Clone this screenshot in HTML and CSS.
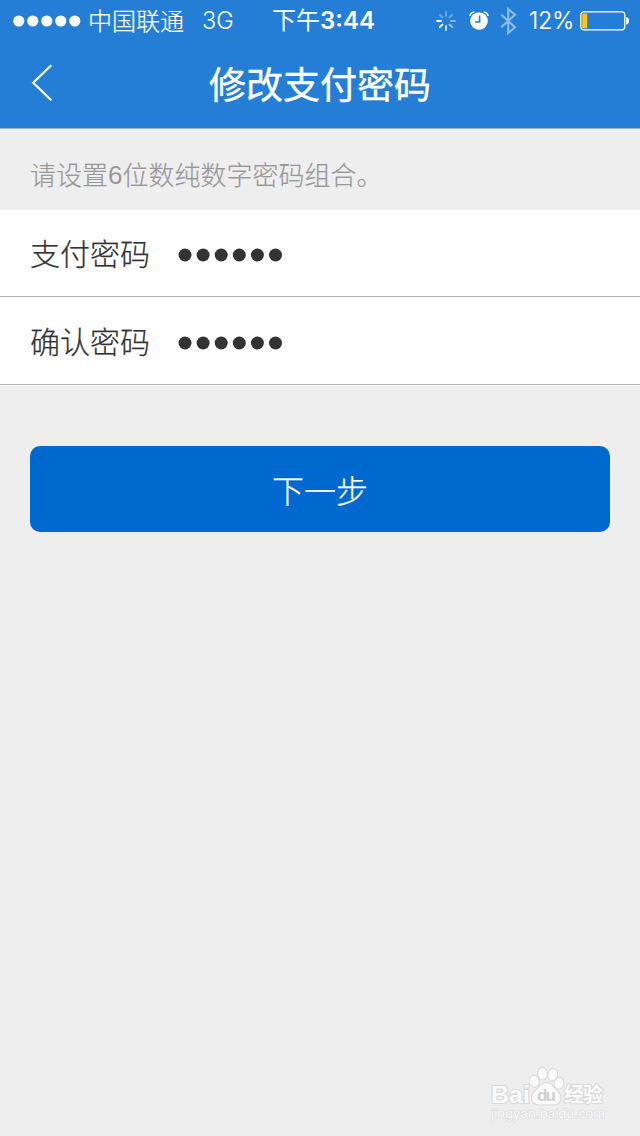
FILE: index.html
```html
<!DOCTYPE html>
<html lang="zh-CN">
<head>
<meta charset="utf-8">
<title>修改支付密码</title>
<link rel="stylesheet" href="styles.css">
</head>
<body>
<div class="screen">
  <header class="header">
    <div class="status">
      <svg class="signal" width="68" height="12" viewBox="0 0 68 12"><g fill="#fff"><circle cx="5.8" cy="6" r="5.6"/><circle cx="19.8" cy="6" r="5.6"/><circle cx="33.8" cy="6" r="5.6"/><circle cx="47.8" cy="6" r="5.6"/><circle cx="61.8" cy="6" r="5.6"/></g></svg>
      <span class="carrier">中国联通</span>
      <span class="network">3G</span>
      <span class="time">下午<b class="clock">3:44</b></span>
      <span class="indicators">
        <svg width="20" height="20" viewBox="-10 -10 20 20" stroke="#fff" stroke-width="1.8" stroke-linecap="round">
          <path d="M0-5V-9" opacity=".35"/><path d="M3.5-3.5L6.2-6.2" opacity=".35"/><path d="M5 0H9" opacity=".45"/><path d="M3.5 3.5L6.2 6.2" opacity=".55"/><path d="M0 5V9" opacity=".85"/><path d="M-3.5 3.5L-6.2 6.2"/><path d="M-5 0H-9"/><path d="M-3.5-3.5L-6.2-6.2" opacity=".35"/>
        </svg>
        <svg class="alarm" width="20" height="20" viewBox="0 0 20 20">
          <circle cx="10" cy="10" r="8.8" fill="#fff"/>
          <path d="M.9 5Q1.5 1.3 5.4.9M14.6.9Q18.5 1.3 19.1 5" fill="none" stroke="#fff" stroke-width="1.5"/>
          <path d="M10.6 4.6V11H6" fill="none" stroke="#247ed6" stroke-width="1.6"/>
        </svg>
        <svg class="bluetooth" width="17" height="28" viewBox="0 0 17 28"><path d="M1.2 7.8L15 20.2L8.2 26V2L15 7.8L1.2 20.2" fill="none" stroke="#8dbdf0" stroke-width="2.1"/></svg>
        <span class="percent">12%</span>
        <svg class="battery" width="50" height="20" viewBox="0 0 50 20"><rect x=".8" y=".8" width="44" height="18" rx="3" fill="none" stroke="#fff" stroke-width="1.3"/><rect x="2.2" y="2.5" width="5" height="14.7" rx="1" fill="#fdc50f"/><path d="M46.2 6Q49 6.4 49 9.8T46.2 13.6Z" fill="#fff"/></svg>
      </span>
    </div>
    <div class="nav">
      <svg class="back" width="22" height="38" viewBox="0 0 22 38"><path d="M20.3 1.3L2.2 18.8L20.3 36.3" fill="none" stroke="#fff" stroke-width="2.2"/></svg>
      <h1 class="title">修改支付密码</h1>
    </div>
  </header>
  <p class="hint">请设置<span class="digit">6</span>位数纯数字密码组合。</p>
  <div class="field"><span class="label">支付密码</span>
    <svg class="dots" width="106" height="14" viewBox="0 0 106 14"><g fill="#333"><circle cx="7" cy="7" r="6.5"/><circle cx="25.1" cy="7" r="6.5"/><circle cx="43.2" cy="7" r="6.5"/><circle cx="61.3" cy="7" r="6.5"/><circle cx="79.4" cy="7" r="6.5"/><circle cx="97.5" cy="7" r="6.5"/></g></svg>
  </div>
  <div class="field field-last"><span class="label">确认密码</span>
    <svg class="dots" width="106" height="14" viewBox="0 0 106 14"><g fill="#333"><circle cx="7" cy="7" r="6.5"/><circle cx="25.1" cy="7" r="6.5"/><circle cx="43.2" cy="7" r="6.5"/><circle cx="61.3" cy="7" r="6.5"/><circle cx="79.4" cy="7" r="6.5"/><circle cx="97.5" cy="7" r="6.5"/></g></svg>
  </div>
  <button class="next">下一步</button>
  <svg class="watermark" width="130" height="60" viewBox="0 0 130 60">
    <g fill="#fafafa" stroke="#d9d9d9" stroke-width="2" paint-order="stroke">
      <text class="wm-brand" x="1" y="37" textLength="39" lengthAdjust="spacingAndGlyphs">Bai</text>
      <ellipse cx="44.3" cy="15.3" rx="4.4" ry="5.6" transform="rotate(-15 44.3 15.3)"/>
      <ellipse cx="52.5" cy="7.7" rx="4.4" ry="5.9"/>
      <ellipse cx="62.7" cy="8.7" rx="4.4" ry="5.9" transform="rotate(12 62.7 8.7)"/>
      <ellipse cx="69" cy="17.5" rx="4.3" ry="5.4" transform="rotate(15 69 17.5)"/>
      <path d="M56.5 17C61.5 17 63.5 21.5 67 25C72.5 30 71.5 38 64 38.5H49C41 38 40 30 45.5 25C49.5 21.5 51.5 17 56.5 17Z"/>
      <text class="wm-cn" x="74" y="36" textLength="39">经验</text>
      <text class="wm-url" x="1" y="52" textLength="114" lengthAdjust="spacingAndGlyphs" stroke-width="1">jingyan.baidu.com</text>
    </g>
    <text class="wm-du" x="47" y="34.5" textLength="19">du</text>
  </svg>
</div>
</body>
</html>
```
FILE: styles.css
```css
* { box-sizing: border-box; }
body { margin: 0; font-family: "Noto Sans CJK SC", sans-serif; }
svg { display: block; flex: none; }
.screen { position: relative; height: 1136px; background: #eee; overflow: hidden; }
.header { height: 129px; background: #247ed6; border-bottom: 1px solid #93b4d3; color: #fff; }
.status { display: flex; align-items: center; height: 41px; padding-left: 13px; white-space: nowrap; font-size: 24px; line-height: 40px; }
.carrier { margin-left: 7px; width: 96px; padding-bottom: 2px; font-weight: 300; -webkit-text-stroke: .2px #fff; }
.network { margin-left: 18px; width: 32px; font-family: Inter, sans-serif; font-size: 23.5px; font-weight: 300; }
.time { margin-left: 38px; width: 104px; padding-bottom: 1px; }
.clock { font-family: Inter, sans-serif; font-size: 24px; font-weight: 600; }
.indicators { display: flex; align-items: center; margin-left: 60px; }
.alarm { margin-left: 13px; }
.bluetooth { margin-left: 11px; }
.percent { margin-left: 12px; width: 47px; font-family: Inter, sans-serif; font-size: 23.5px; font-weight: 300; letter-spacing: -.2px; -webkit-text-stroke: .2px #fff; }
.battery { margin-left: 4px; }
.nav { display: grid; grid-template-columns: 180px 280px 180px; align-items: center; height: 84px; }
.back { margin-left: 31px; }
.title { margin: 0; padding-bottom: 1px; text-align: center; font-size: 37px; line-height: 56px; font-weight: 400; -webkit-text-stroke: .4px #fff; }
.hint { display: flex; align-items: center; height: 81px; margin: 0; padding: 9px 0 0 30px; color: #999; font-size: 26px; line-height: 40px; font-weight: 300; -webkit-text-stroke: .2px #999; }
.digit { padding-top: 1px; font-family: "Liberation Sans", Arial, sans-serif; -webkit-text-stroke: 0; }
.field { display: flex; align-items: center; gap: 28px; height: 87px; padding-left: 30px; background: #fff; border-bottom: 1px solid #b5b5b5; }
.field-last { height: 88px; padding-top: 1px; box-shadow: 0 1px #fff; }
.label { width: 120px; padding-bottom: 2px; color: #333; font-size: 30px; line-height: 44px; font-weight: 300; -webkit-text-stroke: .25px #333; }
.dots { margin-top: 4px; }
.next { display: block; width: 580px; height: 86px; margin: 61px 30px 0; padding: 0; border: 0; border-radius: 10px; background: #0069cf; color: #fff; font-family: inherit; font-size: 32px; font-weight: 300; -webkit-text-stroke: .25px #fff; }
.watermark { position: absolute; left: 490px; top: 1066px; }
.wm-brand { font: 700 24px "Liberation Sans", sans-serif; }
.wm-cn { font: 700 20px "Noto Sans CJK SC", sans-serif; }
.wm-url { font: 12px "Liberation Sans", sans-serif; }
.wm-du { font: 700 17px "Liberation Sans", sans-serif; fill: #d0d0d0; }
```
